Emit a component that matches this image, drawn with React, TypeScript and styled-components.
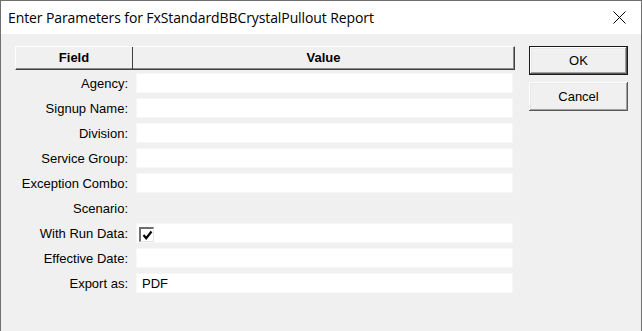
import React from "react";
import styled, { createGlobalStyle } from "styled-components";

const GlobalStyle = createGlobalStyle`
    html, body {
        margin: 0;
        padding: 0;
        background: #f0f0f0;
    }
    * {
        box-sizing: border-box;
    }
`

const StyledWindow = styled.div`
    width: 642px;
    height: 331px;
    border: 1px solid #6f6f6f;
    border-bottom: none;
    background: #f0f0f0;
    display: flex;
    flex-direction: column;
    font-family: Arial, "Liberation Sans", sans-serif;
    font-size: 13px;
    color: #000;
`

const StyledTitleBar = styled.div`
    height: 33px;
    flex: 0 0 33px;
    background: #fff;
    display: flex;
    align-items: center;
    justify-content: space-between;
    padding: 0 15px 0 7px;
`

const StyledTitle = styled.span`
    font-family: "Open Sans", "Noto Sans", sans-serif;
    font-size: 14px;
    color: #000;
    letter-spacing: -0.1px;
`

const StyledBody = styled.div`
    flex: 1;
    display: flex;
    align-items: flex-start;
    gap: 14px;
    padding: 12px 0 0 14px;
`

const StyledGrid = styled.div`
    width: 500px;
    flex: 0 0 500px;
    display: flex;
    flex-direction: column;
    gap: 5px;
`

const StyledHeader = styled.div`
    width: 500px;
    height: 24px;
    display: flex;
    border-top: 1px solid #fff;
    border-left: 1px solid #fff;
    border-right: 1px solid #404040;
    border-bottom: 1px solid #404040;
    box-shadow: inset -1px -1px 0 #8a8a8a;
    margin-bottom: -2px;
`

const StyledFieldHead = styled.div`
    width: 117px;
    min-width: 117px;
    flex-shrink: 0;
    display: flex;
    align-items: center;
    justify-content: center;
    font-weight: bold;
    padding-bottom: 1px;
    border-right: 1px solid #404040;
`

const StyledValueHead = styled.div`
    flex: 1;
    display: flex;
    align-items: center;
    justify-content: center;
    font-weight: bold;
    padding-bottom: 1px;
`

const StyledRow = styled.div`
    height: 20px;
    display: flex;
`

const StyledLabel = styled.div`
    flex: 0 0 121px;
    display: flex;
    align-items: center;
    justify-content: flex-end;
    padding-right: 8px;
    white-space: nowrap;
`

const StyledField = styled.div<{ $empty?: boolean }>`
    flex: 0 0 377px;
    background: ${p => (p.$empty ? "transparent" : "#fff")};
    border: 1px solid ${p => (p.$empty ? "transparent" : "#f7f7f7")};
    display: flex;
    align-items: center;
    padding-left: 5px;
`

const StyledCheckBox = styled.span`
    width: 15px;
    height: 15px;
    margin-left: -3px;
    margin-top: 3px;
    background: #fff;
    border-top: 2px solid #6e6e6e;
    border-left: 2px solid #6e6e6e;
    border-right: 1px solid #e6e6e6;
    border-bottom: 1px solid #e6e6e6;
    display: flex;
    align-items: center;
    justify-content: center;
`

const StyledButtons = styled.div`
    display: flex;
    flex-direction: column;
    gap: 7px;
`

const StyledButton = styled.button<{ $default?: boolean }>`
    width: 99px;
    height: 29px;
    margin: 0;
    padding: 0;
    background: #f0f0f0;
    font-family: Arial, "Liberation Sans", sans-serif;
    font-size: 13px;
    color: #000;
    border: ${p => (p.$default ? "1px solid #1a1a1a" : "none")};
    box-shadow: inset -1px -1px 0 #5a5a5a, inset 1px 1px 0 #fff,
        inset -2px -2px 0 #a0a0a0, inset 2px 2px 0 #e8e8e8;
`

const fields: { label: string; value?: string; check?: boolean; empty?: boolean }[] = [
    { label: "Agency:" },
    { label: "Signup Name:" },
    { label: "Division:" },
    { label: "Service Group:" },
    { label: "Exception Combo:" },
    { label: "Scenario:", empty: true },
    { label: "With Run Data:", check: true },
    { label: "Effective Date:" },
    { label: "Export as:", value: "PDF" },
]

const App = (): JSX.Element => {
    return (
        <>
            <GlobalStyle />
            <StyledWindow>
                <StyledTitleBar>
                    <StyledTitle>Enter Parameters for FxStandardBBCrystalPullout Report</StyledTitle>
                    <svg width="13" height="13" viewBox="0 0 13 13">
                        <path d="M0.5 0.5 L12.5 12.5 M12.5 0.5 L0.5 12.5" stroke="#000" strokeWidth="1" />
                    </svg>
                </StyledTitleBar>
                <StyledBody>
                    <StyledGrid>
                        <StyledHeader>
                            <StyledFieldHead>Field</StyledFieldHead>
                            <StyledValueHead>Value</StyledValueHead>
                        </StyledHeader>
                        {fields.map(f => (
                            <StyledRow key={f.label}>
                                <StyledLabel>{f.label}</StyledLabel>
                                <StyledField $empty={f.empty}>
                                    {f.check && (
                                        <StyledCheckBox>
                                            <svg width="11" height="11" viewBox="0 0 11 11">
                                                <path d="M1.5 5 L4.2 8.2 L9.5 1.5" stroke="#000" strokeWidth="2.2" fill="none" />
                                            </svg>
                                        </StyledCheckBox>
                                    )}
                                    {f.value}
                                </StyledField>
                            </StyledRow>
                        ))}
                    </StyledGrid>
                    <StyledButtons>
                        <StyledButton $default>OK</StyledButton>
                        <StyledButton>Cancel</StyledButton>
                    </StyledButtons>
                </StyledBody>
            </StyledWindow>
        </>
    )
}

export default App;
